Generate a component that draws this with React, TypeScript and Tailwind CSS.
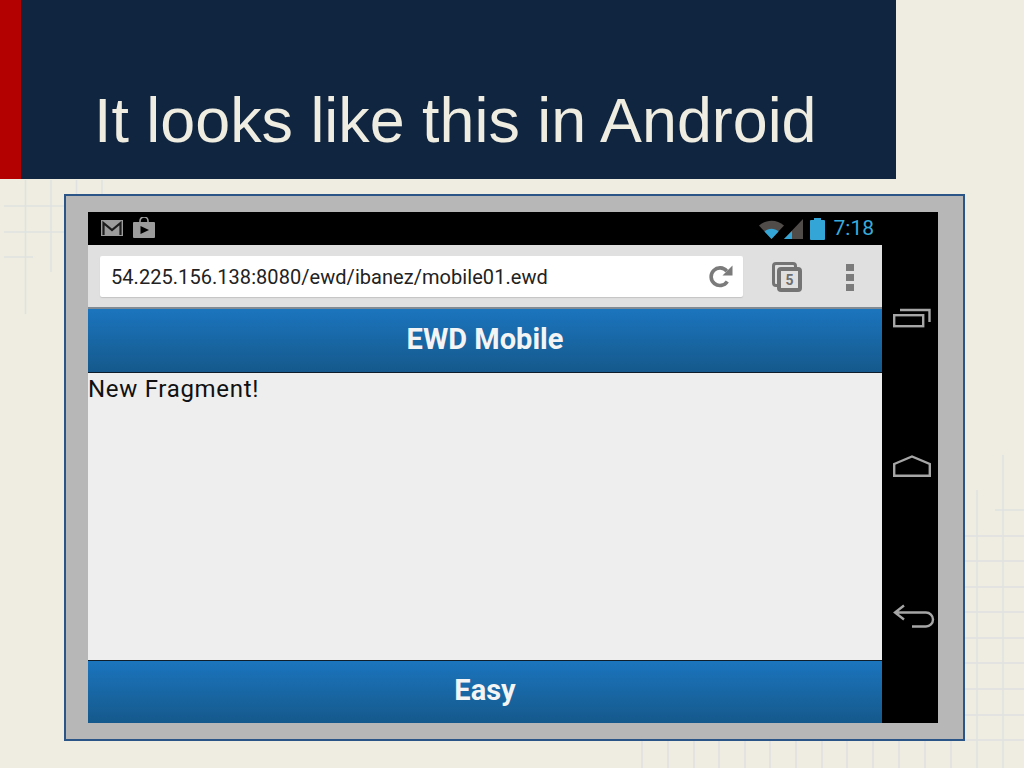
import React from 'react';

const rightRows = [536, 561, 587, 612, 638, 663, 689, 715, 740];
const bottomCols = [642, 668, 694, 719, 745, 770, 796, 822, 847, 873, 899, 925, 951];

function PaperGrid() {
  return (
    <svg className="absolute inset-0 h-full w-full" viewBox="0 0 1024 768" stroke="#dfe2e0" strokeWidth="1.5" fill="none">
      <path d="M25.500 180V314M51 180V272M76.500 180V194M102 180V194M4 206H64M4 232H64M4 257H33" />
      <path d="M977 490V768M1003 455V768M995 510H1024" />
      {rightRows.map((y) => (
        <path key={y} d={`M965 ${y}H1024`} />
      ))}
      {bottomCols.map((x) => (
        <path key={x} d={`M${x} 741V768`} />
      ))}
    </svg>
  );
}

function GmailIcon() {
  return (
    <svg width="22" height="16" viewBox="0 0 22 16">
      <rect width="22" height="16" fill="#9c9c9c" />
      <path d="M2.500 15V3L11 10L19.500 3V15" fill="none" stroke="#1c1c1c" strokeWidth="2.200" />
    </svg>
  );
}

function StoreIcon() {
  return (
    <svg width="22" height="21" viewBox="0 0 22 21">
      <path d="M7 6V4a4 4 0 0 1 8 0V6" fill="none" stroke="#9c9c9c" strokeWidth="1.600" />
      <rect y="5" width="22" height="16" rx="1" fill="#9c9c9c" />
      <path d="M7.500 9L16 13L7.500 17Z" fill="#000" />
    </svg>
  );
}

function StatusIcons() {
  return (
    <svg width="44" height="22" viewBox="0 0 44 22">
      <path d="M0 7.500C7 1 18 1 25 7.500L12.500 21Z" fill="#504c4a" />
      <path d="M5.500 13.500C9.500 9.800 15.500 9.800 19.500 13.500L12.500 21Z" fill="#33a5d6" />
      <path d="M44 1V21H25Z" fill="#504c4a" />
      <path d="M33 13V21H25Z" fill="#33a5d6" />
    </svg>
  );
}

function BatteryIcon() {
  return (
    <svg width="15" height="22" viewBox="0 0 15 22">
      <rect x="4" width="7" height="3" fill="#33a5d6" />
      <rect y="2" width="15" height="20" rx="1" fill="#33a5d6" />
    </svg>
  );
}

function ReloadIcon() {
  return (
    <svg width="24" height="24" viewBox="0 0 24 24">
      <path d="M18.300 16.500A8.800 8.800 0 1 1 17.800 6.200" fill="none" stroke="#7b7b7b" strokeWidth="3.600" />
      <path d="M13.500 10.500H23.500V0.500Z" fill="#7b7b7b" />
    </svg>
  );
}

function TabsIcon() {
  return (
    <div className="relative h-[30px] w-[30px]">
      <div className="absolute left-0 top-0 h-[25px] w-[25px] rounded-[4px] border-[3px] border-[#747474]" />
      <div className="absolute bottom-0 right-0 flex h-[25px] w-[25px] items-center justify-center rounded-[4px] border-[4px] border-[#747474] bg-[#e0e0e0] font-['Roboto',sans-serif] text-[14px] font-bold leading-none text-[#6e6e6e]">
        5
      </div>
    </div>
  );
}

function RecentsIcon() {
  return (
    <svg width="38" height="20" viewBox="0 0 38 20" fill="none" stroke="#a6a6a6" strokeWidth="2.400">
      <rect x="1.200" y="7.200" width="29" height="11" />
      <path d="M7 2H36.500V14" />
    </svg>
  );
}

function HomeIcon() {
  return (
    <svg width="38" height="22" viewBox="0 0 38 22" fill="none" stroke="#a6a6a6" strokeWidth="2.400">
      <path d="M1.200 9L19 1.500L36.800 9V20.800H1.200Z" />
    </svg>
  );
}

function BackIcon() {
  return (
    <svg width="42" height="24" viewBox="0 0 42 24" fill="none" stroke="#a6a6a6" strokeWidth="2.400">
      <path d="M11 1.500L2 8.500L11 15.500M2 8.500H33A7 7 0 0 1 33 22.500H19" />
    </svg>
  );
}

function BlueBar({ label, className }: { label: string; className: string }) {
  return (
    <div className={`flex items-center justify-center bg-gradient-to-b from-[#1b75be] to-[#15598c] pb-[2px] font-['Roboto',sans-serif] text-[29px] font-bold text-[#f4f4f4] ${className}`}>
      {label}
    </div>
  );
}

export default function App() {
  return (
    <div className="relative h-[768px] w-[1024px] overflow-hidden bg-[#efece1]">
      <PaperGrid />

      <div className="relative">
        <div className="flex h-[179px] w-[896px] bg-[#10253f]">
          <div className="w-[21px] bg-[#b30000]" />
          <h1 className="pl-[73px] pt-[80px] font-['Liberation_Sans',sans-serif] text-[62.800px] font-normal leading-[80px] text-[#efece1]">
            It looks like this in Android
          </h1>
        </div>

        <div className="ml-[64px] mt-[15px] h-[547px] w-[901px] border-2 border-[#2b5586] bg-[#b7b7b7] pl-[22px] pt-[16px]">
          <div className="flex h-[511px] w-[850px] flex-col bg-black">
            <div className="flex h-[33px] items-center justify-between pl-[13px] pr-[64px]">
              <div className="flex items-center gap-[10px] pb-[2px]">
                <GmailIcon />
                <StoreIcon />
              </div>
              <div className="flex items-center">
                <StatusIcons />
                <div className="ml-[7px]">
                  <BatteryIcon />
                </div>
                <span className="ml-[9px] font-['Roboto',sans-serif] text-[21px] font-normal leading-none text-[#38abdb]">7:18</span>
              </div>
            </div>

            <div className="flex flex-1">
              <div className="flex w-[794px] flex-col">
                <div className="flex h-[64px] items-start border-b-2 border-[#7f8a92] bg-[#e0e0e0] pl-[12px] pt-[11px]">
                  <div className="flex h-[41px] w-[643px] items-center justify-between rounded-[2px] bg-white pl-[11px] pr-[10px] shadow-[0_1px_1px_#c4c4c4]">
                    <span className="font-['Roboto',sans-serif] text-[20px] tracking-[0.05px] text-[#222]">54.225.156.138:8080/ewd/ibanez/mobile01.ewd</span>
                    <ReloadIcon />
                  </div>
                  <div className="ml-[29px] mt-[6px]">
                    <TabsIcon />
                  </div>
                  <div className="ml-[44px] mt-[8px] flex flex-col gap-[3px]">
                    <div className="h-[7px] w-[8px] bg-[#7b7b7b]" />
                    <div className="h-[7px] w-[8px] bg-[#7b7b7b]" />
                    <div className="h-[7px] w-[8px] bg-[#7b7b7b]" />
                  </div>
                </div>
                <BlueBar label="EWD Mobile" className="h-[64px] border-b border-[#0f1c2a]" />
                <div className="flex-1 bg-[#eeeeee] font-['Roboto',sans-serif] text-[24px] leading-[33px] tracking-[0.7px] text-[#111]">New Fragment!</div>
                <BlueBar label="Easy" className="h-[63px] border-t border-[#0f1c2a]" />
              </div>

              <div className="flex flex-1 flex-col items-start gap-[127px] pl-[11px] pt-[63px]">
                <RecentsIcon />
                <HomeIcon />
                <BackIcon />
              </div>
            </div>
          </div>
        </div>
      </div>
    </div>
  );
}
